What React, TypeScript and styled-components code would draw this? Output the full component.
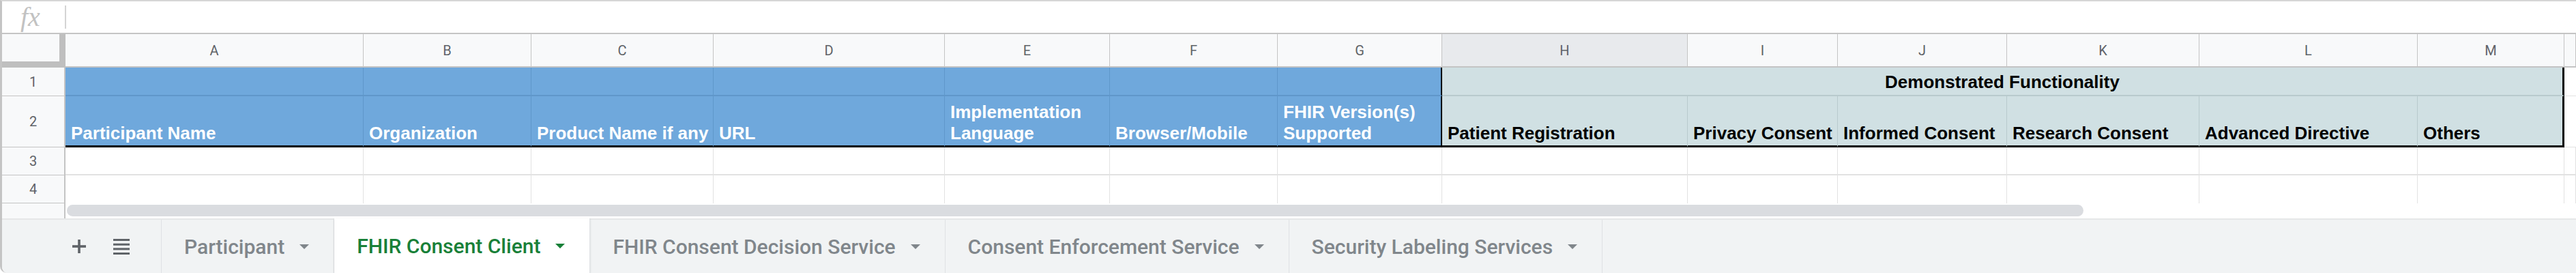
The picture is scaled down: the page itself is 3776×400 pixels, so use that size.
import React from 'react';
import styled, { createGlobalStyle } from 'styled-components';

type Tone = 'blue' | 'teal';

const tones = {
  blue: { fill: '#6fa8dc', grid: '#5f97ca', ink: '#ffffff' },
  teal: { fill: '#d0e0e3', grid: '#b8cacd', ink: '#000000' },
};

const COLS = [
  { id: 'A', w: 437 },
  { id: 'B', w: 246 },
  { id: 'C', w: 267 },
  { id: 'D', w: 339 },
  { id: 'E', w: 242 },
  { id: 'F', w: 246 },
  { id: 'G', w: 241 },
  { id: 'H', w: 360 },
  { id: 'I', w: 220 },
  { id: 'J', w: 248 },
  { id: 'K', w: 282 },
  { id: 'L', w: 320 },
  { id: 'M', w: 215 },
];

const LABELS: { text: string; tone: Tone }[] = [
  { text: 'Participant Name', tone: 'blue' },
  { text: 'Organization', tone: 'blue' },
  { text: 'Product Name if any', tone: 'blue' },
  { text: 'URL', tone: 'blue' },
  { text: 'Implementation\nLanguage', tone: 'blue' },
  { text: 'Browser/Mobile', tone: 'blue' },
  { text: 'FHIR Version(s)\nSupported', tone: 'blue' },
  { text: 'Patient Registration', tone: 'teal' },
  { text: 'Privacy Consent', tone: 'teal' },
  { text: 'Informed Consent', tone: 'teal' },
  { text: 'Research Consent', tone: 'teal' },
  { text: 'Advanced Directive', tone: 'teal' },
  { text: 'Others', tone: 'teal' },
];

const TABS = [
  { name: 'Participant', active: false },
  { name: 'FHIR Consent Client', active: true },
  { name: 'FHIR Consent Decision Service', active: false },
  { name: 'Consent Enforcement Service', active: false },
  { name: 'Security Labeling Services', active: false },
];

const GlobalStyle = createGlobalStyle`
  html, body {
    margin: 0;
    padding: 0;
    background: #ffffff;
  }
  body {
    width: 3776px;
    height: 400px;
    overflow: hidden;
    font-family: Roboto, "Liberation Sans", sans-serif;
  }
`;

const Frame = styled.div`
  width: 3776px;
  height: 400px;
  box-sizing: border-box;
  display: flex;
  flex-direction: column;
  border-top: 2px solid #d6d6d6;
  border-left: 3px solid #c4c4c4;
  border-bottom-left-radius: 10px;
  overflow: hidden;
`;

const FormulaBar = styled.div`
  height: 48px;
  box-sizing: border-box;
  display: flex;
  align-items: center;
  border-bottom: 2px solid #c4c4c4;
  background: #ffffff;
`;

const FxBox = styled.div`
  width: 92px;
  box-sizing: border-box;
  padding-left: 27px;
  font-family: "Liberation Serif", "DejaVu Serif", serif;
  font-style: italic;
  font-size: 40px;
  line-height: 40px;
  color: #c2c2c2;
`;

const Divider = styled.div`
  width: 2px;
  height: 34px;
  background: #d4d4d4;
`;

const Sheet = styled.div`
  display: grid;
  grid-template-columns: 93px ${COLS.map((c) => `${c.w}px`).join(' ')} 1fr;
  grid-template-rows: 49px 42px 75px 41px 41px;
`;

const Corner = styled.div`
  box-sizing: border-box;
  background: #f8f9fa;
  border-right: 9px solid #bfbfbf;
  border-bottom: 9px solid #bfbfbf;
`;

const ColHead = styled.div<{ $active?: boolean }>`
  box-sizing: border-box;
  display: flex;
  align-items: center;
  justify-content: center;
  background: ${(p) => (p.$active ? '#e8eaed' : '#f8f9fa')};
  border-right: 1px solid #c4c4c4;
  border-bottom: 2px solid #c4c4c4;
  font-size: 20px;
  color: #5f6368;
`;

const RowHead = styled.div`
  box-sizing: border-box;
  display: flex;
  align-items: center;
  justify-content: center;
  background: #f8f9fa;
  border-right: 2px solid #c4c4c4;
  border-bottom: 1px solid #c4c4c4;
  font-size: 20px;
  color: #5f6368;
`;

const Band = styled.div<{ $tone: Tone; $edge?: string; $span?: number }>`
  box-sizing: border-box;
  grid-column: span ${(p) => p.$span ?? 1};
  display: flex;
  align-items: flex-end;
  justify-content: center;
  padding-bottom: 3px;
  background: ${(p) => tones[p.$tone].fill};
  border-right: ${(p) => p.$edge ?? `1px solid ${tones[p.$tone].grid}`};
  border-bottom: 2px solid ${(p) => tones[p.$tone].grid};
  font-family: "Liberation Sans", Arial, sans-serif;
  font-weight: 700;
  font-size: 26px;
  line-height: 31px;
  color: ${(p) => tones[p.$tone].ink};
  white-space: nowrap;
`;

const Label = styled.div<{ $tone: Tone; $edge?: string }>`
  box-sizing: border-box;
  display: flex;
  align-items: flex-end;
  padding: 0 0 2px 8px;
  background: ${(p) => tones[p.$tone].fill};
  border-right: ${(p) => p.$edge ?? `1px solid ${tones[p.$tone].grid}`};
  border-bottom: 3px solid #000000;
  font-family: "Liberation Sans", Arial, sans-serif;
  font-weight: 700;
  font-size: 26px;
  line-height: 31px;
  color: ${(p) => tones[p.$tone].ink};
  white-space: pre;
`;

const Blank = styled.div<{ $under?: boolean }>`
  box-sizing: border-box;
  background: #ffffff;
  border-right: 1px solid #e2e2e2;
  border-bottom: ${(p) => (p.$under ? '2px solid #e2e2e2' : 'none')};
`;

const Edge = styled.div`
  background: #ffffff;
  border-bottom: 1px solid #e2e2e2;
`;

const ScrollRow = styled.div`
  height: 22px;
  display: flex;
  background: #ffffff;
`;

const ScrollStub = styled.div`
  width: 93px;
  box-sizing: border-box;
  background: #f8f9fa;
  border-right: 2px solid #c4c4c4;
`;

const Thumb = styled.div`
  width: 2956px;
  height: 17px;
  margin: 2px 0 0 2px;
  border-radius: 9px;
  background: #dadce0;
`;

const TabBar = styled.div`
  flex: 1;
  display: flex;
  align-items: stretch;
  box-sizing: border-box;
  border-top: 2px solid #e6e7e8;
  background: #f1f3f4;
`;

const Tools = styled.div`
  width: 234px;
  box-sizing: border-box;
  display: flex;
  align-items: center;
  gap: 40px;
  padding-left: 103px;
  border-right: 1px solid #dfe1e4;
`;

const Tab = styled.div<{ $active?: boolean }>`
  display: flex;
  align-items: center;
  gap: 22px;
  padding: 0 36px 0 33px;
  margin-top: ${(p) => (p.$active ? '-2px' : '0')};
  border-right: 1px solid #dfe1e4;
  background: ${(p) => (p.$active ? '#ffffff' : 'transparent')};
  box-shadow: ${(p) => (p.$active ? '0 1px 3px rgba(60, 64, 67, 0.15)' : 'none')};
  font-family: Roboto, "Liberation Sans", sans-serif;
  font-weight: 500;
  font-size: 30px;
  color: ${(p) => (p.$active ? '#188038' : '#80868b')};
  white-space: nowrap;
`;

function Caret({ color }: { color: string }) {
  return (
    <svg width="14" height="7" viewBox="0 0 14 7">
      <polygon points="0,0 14,0 7,7" fill={color} />
    </svg>
  );
}

function PlusIcon() {
  return (
    <svg width="20" height="20" viewBox="0 0 20 20">
      <rect x="0" y="8.2" width="20" height="3.6" fill="#5f6368" />
      <rect x="8.2" y="0" width="3.6" height="20" fill="#5f6368" />
    </svg>
  );
}

function ListIcon() {
  return (
    <svg width="24" height="23" viewBox="0 0 24 23">
      <rect x="0" y="0" width="24" height="3" fill="#5f6368" />
      <rect x="0" y="6.7" width="24" height="3" fill="#5f6368" />
      <rect x="0" y="13.3" width="24" height="3" fill="#5f6368" />
      <rect x="0" y="20" width="24" height="3" fill="#5f6368" />
    </svg>
  );
}

function App() {
  return (
    <Frame>
      <GlobalStyle />
      <FormulaBar>
        <FxBox>fx</FxBox>
        <Divider />
      </FormulaBar>

      <Sheet>
        <Corner />
        {COLS.map((c) => (
          <ColHead key={c.id} $active={c.id === 'H'}>
            {c.id}
          </ColHead>
        ))}
        <ColHead />

        <RowHead>1</RowHead>
        {COLS.slice(0, 7).map((c) => (
          <Band key={c.id} $tone="blue" $edge={c.id === 'G' ? '2px solid #000' : undefined} />
        ))}
        <Band $tone="teal" $span={6} $edge="3px solid #000">
          Demonstrated Functionality
        </Band>
        <Edge />

        <RowHead>2</RowHead>
        {LABELS.map((l, i) => (
          <Label
            key={l.text}
            $tone={l.tone}
            $edge={i === 6 ? '2px solid #000' : i === 12 ? '3px solid #000' : undefined}
          >
            {l.text}
          </Label>
        ))}
        <Edge />

        <RowHead>3</RowHead>
        {COLS.map((c) => (
          <Blank key={c.id} $under />
        ))}
        <Blank $under />

        <RowHead>4</RowHead>
        {COLS.map((c) => (
          <Blank key={c.id} />
        ))}
        <Blank />
      </Sheet>

      <ScrollRow>
        <ScrollStub />
        <Thumb />
      </ScrollRow>

      <TabBar>
        <Tools>
          <PlusIcon />
          <ListIcon />
        </Tools>
        {TABS.map((t) => (
          <Tab key={t.name} $active={t.active}>
            {t.name}
            <Caret color={t.active ? '#188038' : '#80868b'} />
          </Tab>
        ))}
      </TabBar>
    </Frame>
  );
}

export default App;
